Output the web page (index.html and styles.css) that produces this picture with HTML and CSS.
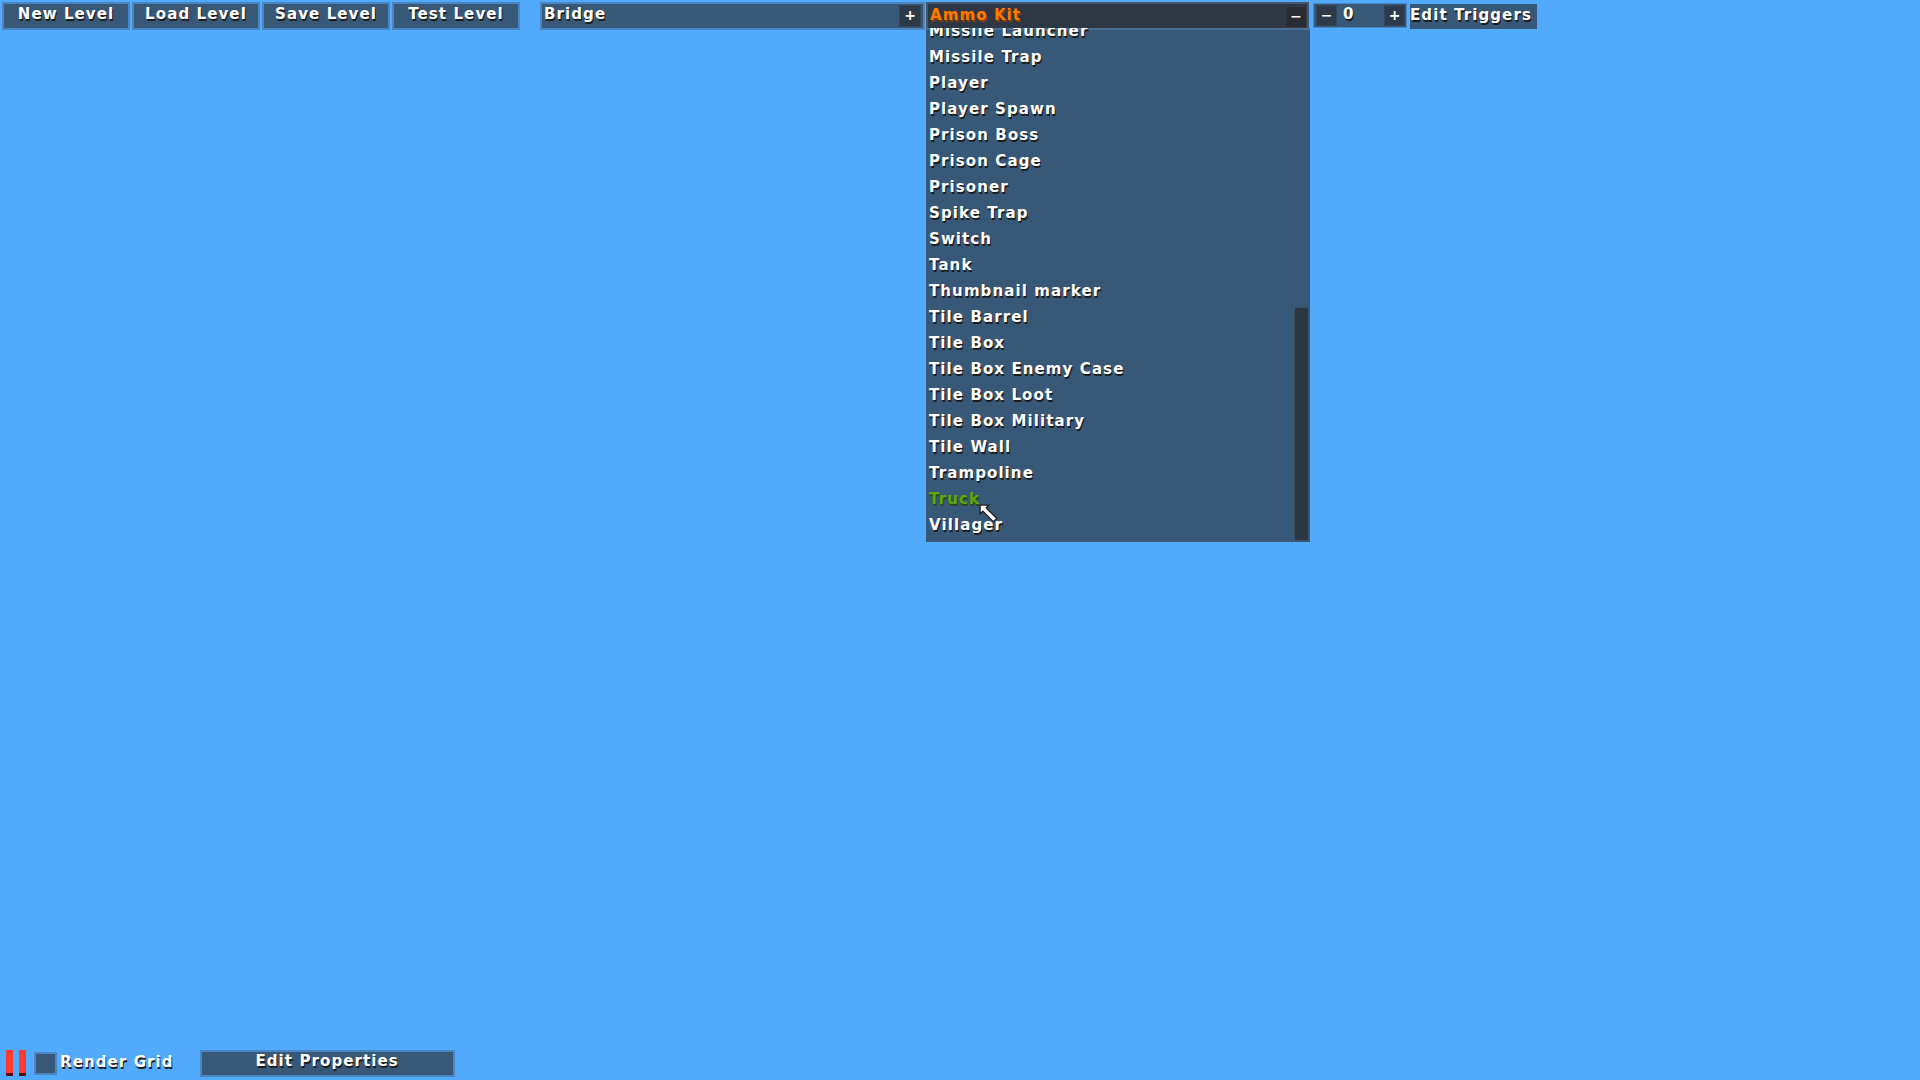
FILE: index.html
```html
<!DOCTYPE html>
<html>
<head>
<meta charset="utf-8">
<link rel="stylesheet" href="styles.css">
</head>
<body>
<div class="app">
  <div class="toolbar">
    <div class="btn">New Level</div>
    <div class="btn">Load Level</div>
    <div class="btn">Save Level</div>
    <div class="btn">Test Level</div>
    <div class="field bridge">
      <span class="label">Bridge</span>
      <span class="mini">+</span>
    </div>
    <div class="combo">
      <div class="combo-head">
        <span class="label orange">Ammo Kit</span>
        <span class="mini dark">−</span>
      </div>
      <div class="combo-list">
        <div class="items">
          <div class="item">Missile Launcher</div>
          <div class="item">Missile Trap</div>
          <div class="item">Player</div>
          <div class="item">Player Spawn</div>
          <div class="item">Prison Boss</div>
          <div class="item">Prison Cage</div>
          <div class="item">Prisoner</div>
          <div class="item">Spike Trap</div>
          <div class="item">Switch</div>
          <div class="item">Tank</div>
          <div class="item">Thumbnail marker</div>
          <div class="item">Tile Barrel</div>
          <div class="item">Tile Box</div>
          <div class="item">Tile Box Enemy Case</div>
          <div class="item">Tile Box Loot</div>
          <div class="item">Tile Box Military</div>
          <div class="item">Tile Wall</div>
          <div class="item">Trampoline</div>
          <div class="item green">Truck</div>
          <div class="item">Villager</div>
        </div>
        <div class="scroll-thumb"></div>
        <svg class="cursor" width="21" height="21" viewBox="0 0 19 19">
          <polygon points="1,1 9,1 6.5,3.5 16,13 13,16 3.5,6.5 1,9" fill="#ffffff" stroke="#1e1e1e" stroke-width="1.2" stroke-linejoin="miter"/>
        </svg>
      </div>
    </div>
    <div class="spinner">
      <span class="mini">−</span>
      <span class="value">0</span>
      <span class="mini">+</span>
    </div>
    <div class="field triggers"><span class="label">Edit Triggers</span></div>
  </div>
  <div class="canvas"></div>
  <div class="bottombar">
    <div class="pause"><span></span><span></span></div>
    <div class="check"></div>
    <span class="label">Render Grid</span>
    <div class="btn props">Edit Properties</div>
  </div>
</div>
</body>
</html>
```
FILE: styles.css
```css
html, body {
  margin: 0;
  padding: 0;
  background: #52aafc;
}
body {
  font-family: "DejaVu Sans", "Verdana", sans-serif;
  font-weight: bold;
  font-size: 15px;
  letter-spacing: 1.1px;
  color: #ffffff;
}
.app {
  height: 100vh;
  display: flex;
  flex-direction: column;
}
.label, .btn, .item, .value {
  text-shadow: 1px 2px 0 #1c1c1c;
  white-space: nowrap;
}
.toolbar {
  display: flex;
  align-items: flex-start;
  padding: 2px 0 0 2px;
  height: 28px;
  position: relative;
  z-index: 2;
}
.btn {
  box-sizing: border-box;
  width: 128px;
  height: 28px;
  margin-right: 2px;
  background: #385878;
  border: 2px solid #4a86c4;
  display: flex;
  align-items: center;
  justify-content: center;
  line-height: 1;
  padding-bottom: 4px;
}
.field {
  box-sizing: border-box;
  height: 28px;
  background: #385878;
  border: 2px solid #4a86c4;
  display: flex;
  align-items: center;
  justify-content: space-between;
  padding: 0 2px 0 2px;
}
.field .label { padding-bottom: 4px; }
.bridge {
  width: 385px;
  margin-left: 18px;
  margin-right: 1px;
}
.mini {
  box-sizing: border-box;
  width: 22px;
  height: 22px;
  background: #2c3a4a;
  border: 1px solid #34485c;
  display: flex;
  align-items: center;
  justify-content: center;
  font-size: 14px;
  letter-spacing: 0;
  line-height: 1;
  padding-bottom: 2px;
}
.mini.dark {
  background: #292d33;
  border-color: #353c45;
}
.combo {
  position: relative;
  width: 383px;
  height: 26px;
  margin-right: 4px;
}
.combo-head {
  box-sizing: border-box;
  height: 26px;
  background: #2d3844;
  border: 2px solid #3f5770;
  border-bottom: 0;
  display: flex;
  align-items: center;
  justify-content: space-between;
  padding: 1px 0 0 2px;
}
.orange {
  color: #ff7a00;
  text-shadow: 1px 2px 0 #8e3f00;
  padding-bottom: 4px;
}
.combo-list {
  position: absolute;
  left: 0;
  top: 26px;
  width: 384px;
  height: 514px;
  background: #385878;
  overflow: hidden;
  box-shadow: inset 0 2px 0 #4a6f94;
}
.items {
  margin-top: -10px;
}
.item {
  height: 26px;
  line-height: 26px;
  padding-left: 3px;
}
.item.green {
  color: #5fa60a;
  text-shadow: 1px 2px 0 #2a4a10;
}
.scroll-thumb {
  position: absolute;
  left: 368px;
  top: 279px;
  width: 15px;
  height: 234px;
  box-sizing: border-box;
  background: #2c3744;
  border: 1px solid #3e5064;
}
.cursor {
  position: absolute;
  left: 53px;
  top: 476px;
}
.spinner {
  box-sizing: border-box;
  width: 94px;
  height: 25px;
  margin-top: 1px;
  margin-right: 3px;
  background: #385878;
  border: 1px solid #4a86c4;
  display: flex;
  align-items: center;
  padding: 0 1px 0 2px;
}
.spinner .mini {
  width: 21px;
  height: 21px;
  background: #2c3a4a;
}
.spinner .value {
  flex: 1;
  padding-left: 6px;
  padding-bottom: 3px;
}
.triggers {
  width: 127px;
  height: 25px;
  margin-top: 2px;
  border: 0;
  padding: 0;
}
.canvas {
  flex: 1;
}
.bottombar {
  display: flex;
  align-items: center;
  padding: 0 0 3px 6px;
  height: 28px;
}
.pause {
  display: flex;
  gap: 6px;
  height: 26px;
}
.pause span {
  width: 7px;
  height: 26px;
  background: linear-gradient(#ff3a30 0, #ff3a30 23px, #5a0808 23px);
}
.check {
  box-sizing: border-box;
  width: 23px;
  height: 23px;
  margin-left: 8px;
  background: #385878;
  border: 2px solid #4a86c4;
}
.bottombar .label {
  margin-left: 3px;
  padding-bottom: 3px;
}
.props {
  width: 255px;
  height: 27px;
  margin-left: 26px;
}
```
